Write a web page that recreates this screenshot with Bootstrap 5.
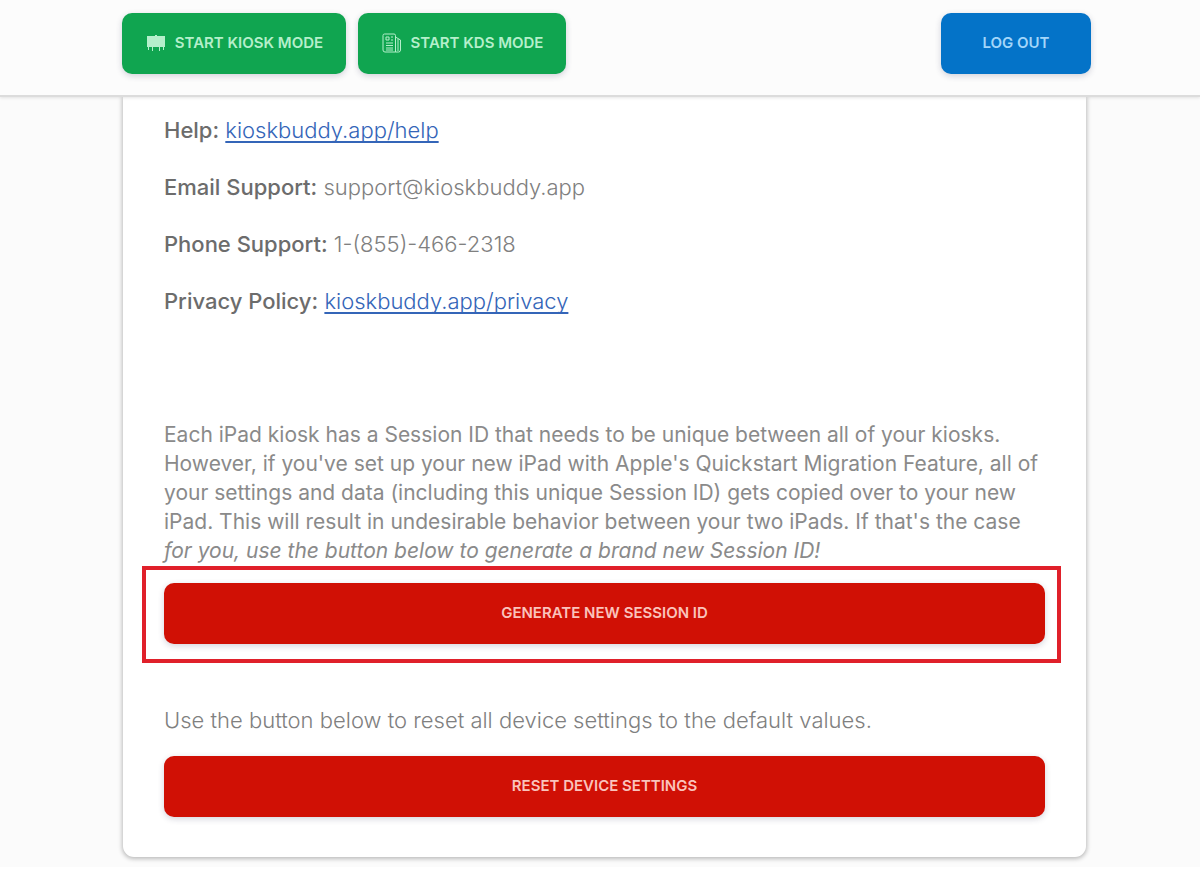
<!DOCTYPE html>
<html lang="en">
<head>
<meta charset="utf-8">
<meta name="viewport" content="width=device-width, initial-scale=1">
<title>Device settings</title>
<link href="https://cdn.jsdelivr.net/npm/bootstrap@5.3.0/dist/css/bootstrap.min.css" rel="stylesheet">
<style>
  body { font-family: Inter, "Liberation Sans", sans-serif; font-size: 22px; font-weight: 300; line-height: 29px; color: #808080; background: #fff; }
  .page { background: #fbfbfb; padding-bottom: 10px; }
  .topbar { background: #fcfcfc; border-bottom: 2px solid #dcdcdc; padding: 13px 109px 21px 122px; box-shadow: 0 1px 3px rgba(0,0,0,.1); z-index: 2; }
  .modes { gap: 12px; }
  .action { height: 61px; border: 0; border-radius: 10px; font-size: 15px; font-weight: 600; line-height: 20px; text-transform: uppercase; padding: 0 0 2px; box-shadow: 0 2px 6px rgba(40,40,80,.2); }
  .action-green, .action-green:hover { background: #10a550; color: #b5efcb; }
  .action-blue, .action-blue:hover { background: #0473c8; color: #a3d6fa; }
  .action-red, .action-red:hover { background: #d01005; color: #fac3bc; }
  .w-kiosk { width: 224px; } .w-kds { width: 208px; } .w-logout { width: 150px; }
  .panel { margin: 0 114px 0 123px; border: 0; border-radius: 0 0 11px 11px; color: inherit; box-shadow: 0 1px 4px 1px rgba(0,0,0,.25); }
  .panel-body { padding: 19px 41px 40px; }
  .contact-list { row-gap: 28px; margin-bottom: 104px; }
  .contact-list strong { font-weight: 500; color: #6c6c6c; }
  .contact-list a { color: #3465b8; text-decoration-thickness: 2px; text-underline-offset: 3px; text-decoration-skip-ink: none; }
  .session-text { font-size: 21px; font-weight: 400; color: #8a8a8a; margin: 0; }
  .highlight { border: 4px solid #e0202a; margin: 1px -16px 43px -22px; padding: 13px 12px 15px 18px; }
  .reset-text { margin-bottom: 21px; }
</style>
</head>
<body>
<div class="page">
  <header class="topbar position-relative d-flex flex-wrap justify-content-between gap-2">
    <div class="modes d-flex flex-wrap">
      <button type="button" class="btn action action-green w-kiosk d-flex align-items-center justify-content-center gap-2">
        <svg width="22" height="20" viewBox="0 0 22 20" fill="currentColor" aria-hidden="true"><path d="M2 3h8V2h2v1h8v11h-1v3h-1v-3h-3v4h-1v-4H8v4H7v-4H4v3H3v-3H2z"/></svg>
        <span>Start Kiosk Mode</span>
      </button>
      <button type="button" class="btn action action-green w-kds d-flex align-items-center justify-content-center gap-2">
        <svg width="22" height="22" viewBox="0 0 22 22" fill="none" stroke="currentColor" stroke-width="1" aria-hidden="true"><path d="M2 3.500Q2 2 3.500 2H13q1.500 0 1.500 1.500V20H4q-2 0-2-2zM14.500 5l5 3v10q0 2-2 2h-3M17 7v12M5 5h3v3H5zM10 5h2M10 8h2M5 11h7M5 13.500h7M5 16h7M5 18h7"/></svg>
        <span>Start KDS Mode</span>
      </button>
    </div>
    <button type="button" class="btn action action-blue w-logout">Log Out</button>
  </header>
  <main class="card panel">
    <div class="panel-body">
      <div class="contact-list d-flex flex-column">
        <div><strong>Help:</strong> <a href="#help">kioskbuddy.app/help</a></div>
        <div><strong>Email Support:</strong> support@kioskbuddy.app</div>
        <div><strong>Phone Support:</strong> 1-(855)-466-2318</div>
        <div><strong>Privacy Policy:</strong> <a href="#privacy">kioskbuddy.app/privacy</a></div>
      </div>
      <p class="session-text">Each iPad kiosk has a Session ID that needs to be unique between all of your kiosks. However, if you've set up your new iPad with Apple's Quickstart Migration Feature, all of your settings and data (including this unique Session ID) gets copied over to your new iPad. This will result in undesirable behavior between your two iPads. If that's the case<br><em>for you, use the button below to generate a brand new Session ID!</em></p>
      <div class="highlight"><button type="button" class="btn action action-red w-100">Generate New Session ID</button></div>
      <p class="reset-text">Use the button below to reset all device settings to the default values.</p>
      <button type="button" class="btn action action-red w-100">Reset Device Settings</button>
    </div>
  </main>
</div>
<script src="https://cdn.jsdelivr.net/npm/bootstrap@5.3.0/dist/js/bootstrap.bundle.min.js"></script>
</body>
</html>
